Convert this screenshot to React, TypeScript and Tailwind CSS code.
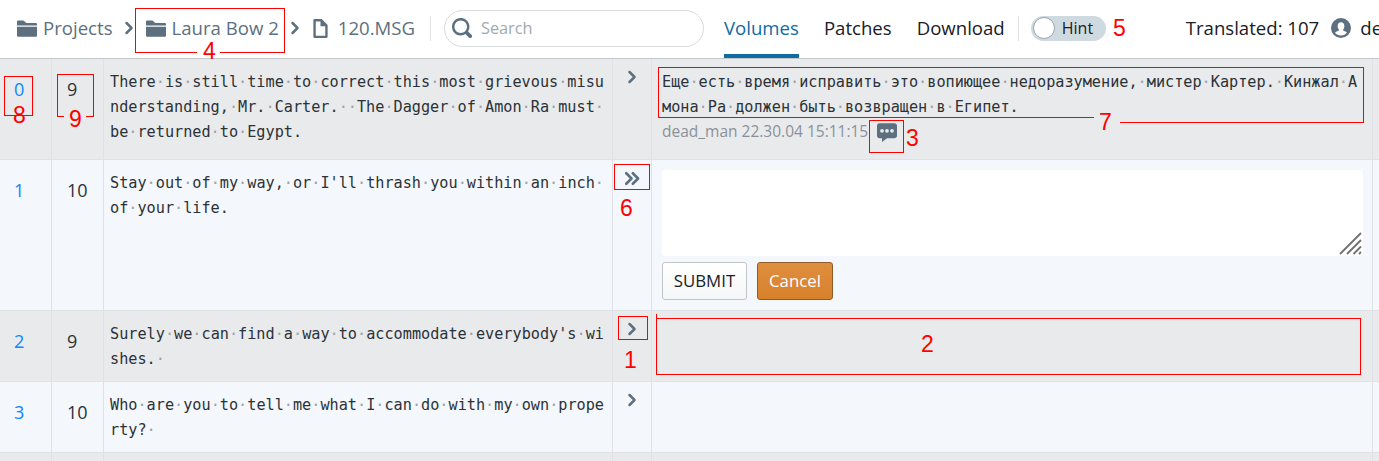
import { Fragment } from "react";

const sans = "font-['Open_Sans',sans-serif]";
const mono = "font-['DejaVu_Sans_Mono',monospace]";

function Icon({ d, size = 16, className = "" }: { d: string; size?: number; className?: string }) {
  return (
    <svg width={size} height={size} viewBox="0 0 16 16" className={`shrink-0 fill-[#5c7080] ${className}`}>
      <path fillRule="evenodd" d={d} />
    </svg>
  );
}

const folder = "M0 14c0 .55.45 1 1 1h14c.55 0 1-.45 1-1V7H0v7zm15-10H7.41L5.7 2.3A.965.965 0 005 2H1c-.55 0-1 .45-1 1v3h16V5c0-.55-.45-1-1-1z";
const chevron = "M10.71 7.29l-4-4a1.003 1.003 0 00-1.42 1.42L8.59 8 5.3 11.29c-.19.18-.3.43-.3.71a1.003 1.003 0 001.71.71l4-4c.18-.18.29-.43.29-.71 0-.28-.11-.53-.29-.71z";
const doubleChevron = "M8.71 7.29l-4-4a1.003 1.003 0 00-1.42 1.42L6.59 8 3.3 11.29a1.003 1.003 0 001.42 1.42l4-4c.18-.18.29-.43.29-.71 0-.28-.11-.53-.3-.71zm5 0l-4-4a1.003 1.003 0 00-1.42 1.42L11.59 8 8.3 11.29a1.003 1.003 0 001.42 1.42l4-4c.18-.18.29-.43.29-.71 0-.28-.11-.53-.3-.71z";
const documentIcon = "M9 0H3c-.55 0-1 .45-1 1v14c0 .55.45 1 1 1h10c.55 0 1-.45 1-1V5L9 0zm3 14H4V2h4v4h4v8z";
const search = "M15.55 13.43l-2.67-2.68a6.94 6.94 0 001.11-3.76c0-3.87-3.13-7-7-7s-7 3.13-7 7 3.13 7 7 7c1.39 0 2.68-.42 3.76-1.11l2.68 2.67a1.498 1.498 0 102.12-2.12zm-8.56-1.44c-2.76 0-5-2.24-5-5s2.24-5 5-5 5 2.24 5 5-2.24 5-5 5z";
const user = "M8 0a8 8 0 100 16A8 8 0 008 0zm0 14c-1.9 0-3.6-.85-4.75-2.18.3-.55 1.05-.95 2.1-1.35.95-.35.8-.3.95-.6.1-.3.05-.6-.15-.85C5.6 8.4 5.3 7.5 5.3 6.6 5.3 4.6 6.4 3.4 8 3.4s2.7 1.2 2.7 3.2c0 .9-.3 1.8-.85 2.42-.2.25-.25.55-.15.85.15.3 0 .25.95.6 1.05.4 1.8.8 2.1 1.35A6 6 0 018 14z";
const comment = "M14 1H2C.9 1 0 1.9 0 3v8c0 1.1.9 2 2 2h2v3l4-3h6c1.1 0 2-.9 2-2V3c0-1.100-.9-2-2-2zM4 8.500a1.500 1.500 0 110-3 1.500 1.500 0 010 3zm4 0a1.500 1.500 0 110-3 1.500 1.500 0 010 3zm4 0a1.500 1.500 0 110-3 1.500 1.500 0 010 3z";

// spaces are shown as small grey dots in the editor
function Mono({ text }: { text: string }) {
  return (
    <div className={`${mono} text-[15.2px] leading-[25px] text-[#2b3238] break-all`}>
      {text.split(" ").map((part, i) => (
        <Fragment key={i}>
          {i > 0 && <span className="text-[#9aa3ab]">·</span>}
          {part && <span>{part}</span>}
        </Fragment>
      ))}
    </div>
  );
}

function Box({ className }: { className: string }) {
  return <div className={`absolute border-[#ff0000] ${className}`} />;
}

function Num({ children, className }: { children: string; className: string }) {
  return (
    <span className={`absolute font-['Liberation_Sans',sans-serif] text-[23px] leading-[23px] text-[#ff0000] ${className}`}>
      {children}
    </span>
  );
}

type RowProps = {
  index: number;
  volume: number;
  text: string;
  gray: boolean;
  height: string;
  double?: boolean;
  children?: React.ReactNode;
};

function Row({ index, volume, text, gray, height, double = false, children }: RowProps) {
  return (
    <div className={`flex border-b border-[#dee2e7] ${height} ${gray ? "bg-[#e9eaec]" : "bg-[#f4f7fb]"}`}>
      <div className="w-[52px] border-r border-[#dee2e7] pl-[14px] pt-[18px] text-[18px] leading-[25px] text-[#0f85ff]">
        {index}
      </div>
      <div className="w-[52px] border-r border-[#dee2e7] pl-[15px] pt-[18px] text-[18px] leading-[25px] text-[#2b3238]">
        {volume}
      </div>
      <div className="w-[509px] border-r border-[#dee2e7] px-[6px] pt-[11px]">
        <Mono text={text} />
      </div>
      <div className="w-[39px] border-r border-[#dee2e7] pl-[9px] pt-[8px]">
        {double ? <Icon d={doubleChevron} size={21} className="-ml-[1px]" /> : <Icon d={chevron} size={20} />}
      </div>
      <div className="w-[721px] border-r border-[#dee2e7] pl-[10px] pr-[9px] pt-[10px]">{children}</div>
    </div>
  );
}

export default function App() {
  return (
    <div className={`${sans} relative h-[461px] w-[1379px] overflow-hidden bg-[#f4f7fb]`}>
      {/* Navbar */}
      <div className="flex h-[59px] items-center whitespace-nowrap border-b border-[#c4c6c8] bg-white pb-[2px] pl-[17px] text-[18.6px]">
        <Icon d={folder} size={20} />
        <span className="ml-[6px] text-[#5c7080]">Projects</span>
        <Icon d={chevron} size={20} className="ml-[6px]" />
        <Icon d={folder} size={20} className="ml-[7px]" />
        <span className="ml-[6px] text-[#5c7080]">Laura Bow 2</span>
        <Icon d={chevron} size={20} className="ml-[6px]" />
        <Icon d={documentIcon} size={19} className="ml-[6px]" />
        <span className="ml-[8px] text-[#5c7080]">120.MSG</span>
        <div className="ml-[15px] h-[25px] w-px shrink-0 bg-[#dfe1e3]" />
        <div className="ml-[13px] flex h-[37px] w-[260px] shrink-0 items-center gap-[9px] rounded-full border border-[#d8dadc] pl-[7px] text-[16.3px] text-[#a0aab2]">
          <Icon d={search} size={20} />
          <span>Search</span>
        </div>
        <div className="relative ml-[20px] flex h-[57px] shrink-0 items-center text-[#106ba3]">
          Volumes
          <div className="absolute -bottom-[1px] left-0 h-[4px] w-full bg-[#106ba3]" />
        </div>
        <div className="ml-[25px] shrink-0 text-[#182026]">Patches</div>
        <div className="ml-[25px] shrink-0 text-[#182026]">Download</div>
        <div className="ml-[13px] h-[25px] w-px shrink-0 bg-[#dfe1e3]" />
        <div className="ml-[12px] flex h-[25px] w-[75px] shrink-0 items-center rounded-full bg-[#ced9e0] pl-[2px] text-[16px] text-[#182026]">
          <div className="h-[22px] w-[22px] rounded-full border border-[#9aa5ad] bg-white" />
          <span className="ml-[7px]">Hint</span>
        </div>
        <div className="ml-[80px] shrink-0 text-[#182026]">Translated: 107</div>
        <Icon d={user} size={20} className="ml-[12px]" />
        <div className="ml-[9px] shrink-0 text-[#182026]">dead_man</div>
      </div>

      {/* Lines */}
      <Row
        index={0}
        volume={9}
        gray
        height="h-[101px]"
        text="There is still time to correct this most grievous misunderstanding, Mr. Carter.  The Dagger of Amon Ra must be returned to Egypt."
      >
        <div className="pt-px">
          <Mono text="Еще есть время исправить это вопиющее недоразумение, мистер Картер. Кинжал Амона Ра должен быть возвращен в Египет." />
        </div>
        <div className="flex h-[24px] items-center text-[15.5px] text-[#8a9199]">
          <span>dead_man 22.30.04 15:11:15</span>
          <Icon d={comment} size={20} className="ml-[9px]" />
        </div>
      </Row>
      <Row
        index={1}
        volume={10}
        gray={false}
        height="h-[151px]"
        double
        text="Stay out of my way, or I'll thrash you within an inch of your life."
      >
        <div className="relative h-[86px] rounded-[3px] bg-white">
          <svg width="24" height="24" viewBox="0 0 24 24" className="absolute bottom-[1px] right-[1px] fill-none stroke-[#707070] stroke-[1.8]">
            <path d="M2 23 L23 2 M9 23 L23 9 M15.500 23 L23 15.500 M21 23 L23 21" />
          </svg>
        </div>
        <div className="mt-[6px] flex gap-[10px] text-[16.8px]">
          <button className="h-[38px] w-[85px] rounded-[3px] border border-[#c2c5c8] bg-gradient-to-b from-white to-[#f5f6f7] text-[#182026]">
            SUBMIT
          </button>
          <button className="h-[38px] w-[76px] rounded-[3px] border border-[#8f5c25] bg-gradient-to-b from-[#de8e3f] to-[#d8812a] text-white">
            Cancel
          </button>
        </div>
      </Row>
      <Row
        index={2}
        volume={9}
        gray
        height="h-[71px]"
        text="Surely we can find a way to accommodate everybody's wishes. "
      />
      <Row
        index={3}
        volume={10}
        gray={false}
        height="h-[71px]"
        text="Who are you to tell me what I can do with my own property? "
      />
      <div className="flex h-[8px] bg-[#e9eaec]">
        <div className="h-full w-[52px] border-r border-[#dee2e7]" />
        <div className="h-full w-[52px] border-r border-[#dee2e7]" />
        <div className="h-full w-[509px] border-r border-[#dee2e7]" />
        <div className="h-full w-[39px] border-r border-[#dee2e7]" />
        <div className="h-full w-[721px] border-r border-[#dee2e7]" />
      </div>

      {/* Red annotations */}
      <Box className="left-[135px] top-[8px] h-[45px] w-[150px] border" />
      <div className="absolute left-[197px] top-[50px] h-[5px] w-[23px] bg-white" />
      <Num className="left-[203px] top-[40px]">4</Num>
      <Box className="left-[4px] top-[76px] h-[40px] w-[29px] border" />
      <Num className="left-[13px] top-[104px]">8</Num>
      <Box className="left-[57px] top-[74px] h-[43px] w-[37px] border" />
      <div className="absolute left-[64px] top-[114px] h-[4px] w-[22px] bg-[#e9eaec]" />
      <Num className="left-[69px] top-[108px]">9</Num>
      <Box className="left-[658px] top-[67px] h-[51px] w-[436px] border-l border-t border-b" />
      <Box className="left-[1093px] top-[67px] h-[56px] w-[271px] border-t border-r" />
      <Box className="left-[1120px] top-[122px] h-0 w-[244px] border-t" />
      <Num className="left-[1099px] top-[111px]">7</Num>
      <Box className="left-[869px] top-[120px] h-[33px] w-[35px] border" />
      <Num className="left-[906px] top-[127px]">3</Num>
      <Num className="left-[1113px] top-[17px]">5</Num>
      <Box className="left-[614px] top-[164px] h-[26px] w-[36px] border" />
      <Num className="left-[620px] top-[197px]">6</Num>
      <Box className="left-[618px] top-[316px] h-[24px] w-[30px] border" />
      <Num className="left-[624px] top-[349px]">1</Num>
      <Box className="left-[656px] top-[318px] h-[57px] w-[705px] border" />
      <Box className="left-[656px] top-[314px] h-[4px] w-0 border-l" />
      <Num className="left-[921px] top-[333px]">2</Num>
    </div>
  );
}
